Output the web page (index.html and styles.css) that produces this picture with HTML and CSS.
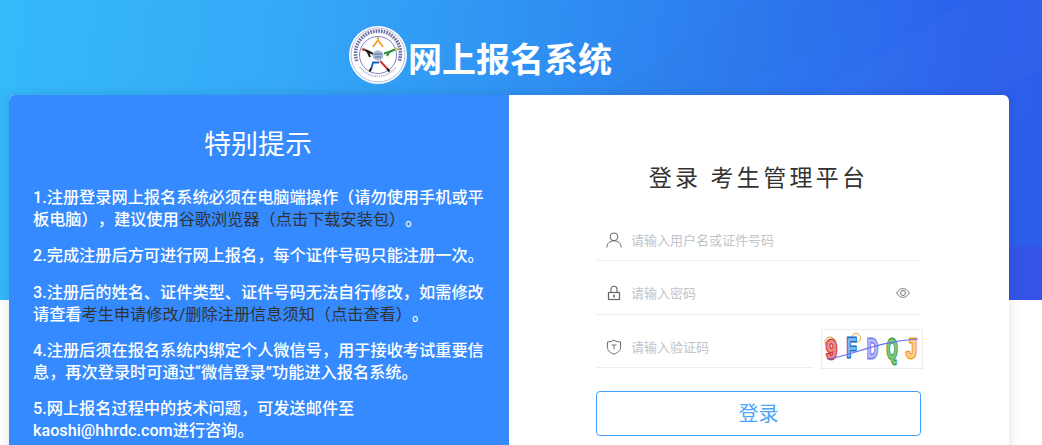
FILE: index.html
```html
<!DOCTYPE html>
<html lang="zh-CN">
<head>
<meta charset="utf-8">
<title>网上报名系统</title>
<link rel="stylesheet" href="styles.css">
</head>
<body>
<div class="page">
  <header class="brand">
    <svg class="logo" width="58" height="58" viewBox="0 0 58 58" aria-hidden="true">
      <circle cx="29" cy="29" r="29" fill="#fff"/>
      <circle cx="29" cy="29" r="27" fill="none" stroke="#a9acd0" stroke-width=".8"/>
      <circle cx="29" cy="29" r="18.5" fill="none" stroke="#6f76b5" stroke-width=".9"/>
      <path d="M7.8 35 A22.5 22.5 0 1 1 50.2 35" fill="none" stroke="#4a4f8f" stroke-width="3.6" stroke-dasharray="1.7 1" opacity=".8"/>
      <path d="M11 41 A22 22 0 0 0 47 41" fill="none" stroke="#a4a7bf" stroke-width="2" stroke-dasharray="1.2 1" opacity=".8"/>
      <path d="M29 14 L24 21 M29 14 L34 21" stroke="#f2a12e" stroke-width="1.8" fill="none"/>
      <circle cx="29" cy="12.5" r="1.3" fill="#f2a12e"/>
      <path d="M16 24 Q21 26 25 28.5 M18 25 Q20 28 21 31" stroke="#1c1a1a" stroke-width="2" fill="none"/>
      <circle cx="14.5" cy="23.5" r="1.6" fill="#b5432f"/>
      <path d="M46 23.5 Q41 26 35 27.5 M41 25 Q39 28 38 30" stroke="#2e8f35" stroke-width="2" fill="none"/>
      <circle cx="47.5" cy="23" r="1.6" fill="#e3c03a"/>
      <path d="M30 36.5 L24 36.5 L22.5 42" stroke="#1e63c4" stroke-width="1.9" fill="none"/>
      <path d="M22.5 42 L20.5 45.5" stroke="#1c1a1a" stroke-width="2" fill="none"/>
      <path d="M31 35 L33 37 L38 42.5" stroke="#d32f2f" stroke-width="1.9" fill="none"/>
      <path d="M38 42.5 L40.5 45.5" stroke="#1c1a1a" stroke-width="2" fill="none"/>
      <ellipse cx="29" cy="29.5" rx="5.5" ry="5" fill="#a9bcd6"/>
      <path d="M25 28 H33 M26 31 H32" stroke="#4f6a93" stroke-width=".9"/>
    </svg>
    <h1 class="brand-title">网上报名系统</h1>
  </header>
  <main class="card">
    <section class="notice">
      <h2 class="notice-title">特别提示</h2>
      <p class="notice-item">1.注册登录网上报名系统必须在电脑端操作（请勿使用手机或平板电脑），建议使用<a class="dark-link">谷歌浏览器（点击下载安装包）</a>。</p>
      <p class="notice-item">2.完成注册后方可进行网上报名，每个证件号码只能注册一次。</p>
      <p class="notice-item">3.注册后的姓名、证件类型、证件号码无法自行修改，如需修改请查看<a class="dark-link">考生申请修改/删除注册信息须知（点击查看）</a>。</p>
      <p class="notice-item">4.注册后须在报名系统内绑定个人微信号，用于接收考试重要信息，再次登录时可通过“微信登录”功能进入报名系统。</p>
      <p class="notice-item">5.网上报名过程中的技术问题，可发送邮件至<br>kaoshi@hhrdc.com进行咨询。</p>
    </section>
    <section class="login">
      <h2 class="login-title">登录 考生管理平台</h2>
      <div class="field field-user">
        <svg class="icon" width="16" height="16" viewBox="0 0 16 16" aria-hidden="true"><circle cx="8" cy="4.8" r="3.9" fill="none" stroke="#666" stroke-width="1"/><path d="M.8 15.6 C.8 11.4 4 8.8 8 8.8 S15.2 11.4 15.2 15.6" fill="none" stroke="#666" stroke-width="1"/></svg>
        <span class="placeholder">请输入用户名或证件号码</span>
      </div>
      <div class="field field-pass">
        <svg class="icon" width="16" height="16" viewBox="0 0 16 16" aria-hidden="true"><rect x="2.5" y="7.5" width="11" height="7" fill="none" stroke="#666" stroke-width="1.2"/><path d="M5 7.5 V4.2 a3 3 0 0 1 6 0 V7.5" fill="none" stroke="#666" stroke-width="1.1"/><rect x="7.2" y="9.6" width="1.6" height="2.8" fill="#666"/></svg>
        <span class="placeholder">请输入密码</span>
        <svg class="eye" width="14" height="10" viewBox="0 0 14 10" aria-hidden="true"><path d="M.6 5 C3 1.4 5 .6 7 .6 S11 1.4 13.4 5 C11 8.6 9 9.4 7 9.4 S3 8.6 .6 5 Z" fill="none" stroke="#666" stroke-width=".9"/><circle cx="7" cy="5" r="2.5" fill="none" stroke="#666" stroke-width=".9"/></svg>
      </div>
      <div class="captcha-row">
        <div class="field field-code">
          <svg class="icon" width="16" height="16" viewBox="0 0 16 16" aria-hidden="true"><path d="M8 1 C10 2.4 12 3 14.6 3 V8.4 C14.6 11.6 11.5 14 8 15.2 C4.5 14 1.4 11.6 1.4 8.4 V3 C4 3 6 2.4 8 1 Z" fill="none" stroke="#666" stroke-width="1"/><path d="M5.6 6 H10.4 M8 6 V10.4" fill="none" stroke="#666" stroke-width=".9"/></svg>
          <span class="placeholder">请输入验证码</span>
        </div>
        <svg class="captcha" width="102" height="40" viewBox="0 0 102 40" role="img" aria-label="9FDQJ">
          <rect x=".5" y=".5" width="101" height="39" fill="#fff" stroke="#ececec"/>
          <circle cx="9" cy="13" r="5" fill="none" stroke="#c9a24a"/>
          <circle cx="35" cy="9" r="4.5" fill="none" stroke="#eda83d"/>
          <text class="cap-char cap-red" x="5" y="30" textLength="11" lengthAdjust="spacingAndGlyphs">9</text>
          <text class="cap-char cap-blue" x="25.5" y="28" textLength="10" lengthAdjust="spacingAndGlyphs">F</text>
          <text class="cap-char cap-violet" x="46" y="29" textLength="11" lengthAdjust="spacingAndGlyphs">D</text>
          <text class="cap-char cap-green" x="65.5" y="29" textLength="11" lengthAdjust="spacingAndGlyphs">Q</text>
          <text class="cap-char cap-orange" x="85" y="29" textLength="11" lengthAdjust="spacingAndGlyphs">J</text>
          <path d="M6 30 C35 26 52 13 97 10" fill="none" stroke="#6a6cf5" stroke-width="1.2"/>
        </svg>
      </div>
      <button class="login-btn" type="button">登录</button>
    </section>
  </main>
</div>
</body>
</html>
```
FILE: styles.css
```css
html, body {
  margin: 0;
  height: 445px;
  overflow: hidden;
  background: #fff;
  font-family: "Noto Sans", "Noto Sans CJK SC", sans-serif;
}
.page {
  width: 1042px;
  height: 445px;
  overflow: hidden;
  background-color: #fff;
  background-image:
    linear-gradient(180deg, transparent 245px, #3354e6 248px),
    linear-gradient(148deg, transparent 514px, rgba(255,255,255,.014) 514px, rgba(255,255,255,.014) 610px, transparent 610px),
    linear-gradient(148deg, transparent 400px, rgba(0,0,0,.012) 400px, rgba(0,0,0,.012) 470px, transparent 470px),
    linear-gradient(97deg, #35bafb 0%, #35aaf7 25%, #2f93f3 48%, #2e7eef 66%, #2b62ec 90%, #2c5cea 100%);
  background-size: 33px 300px, 100% 300px, 100% 300px, 100% 300px;
  background-position: right top, left top, left top, left top;
  background-repeat: no-repeat;
}
.brand {
  height: 95px;
  display: flex;
  justify-content: flex-start;
  align-items: flex-start;
  padding: 26px 0 0 349px;
  box-sizing: border-box;
}
.logo { flex: none; }
.brand-title {
  margin: 9px 0 0 1px;
  font-family: "Noto Sans CJK SC", sans-serif;
  font-size: 34px;
  line-height: 46px;
  font-weight: 700;
  color: #fff;
}
.card {
  width: 1000px;
  margin-left: 9px;
  display: flex;
  height: 400px;
  border-radius: 6px 6px 0 0;
  background: #fff;
  box-shadow: 0 0 12px rgba(0, 0, 0, .12);
}
.notice {
  width: 500px;
  box-sizing: border-box;
  padding: 31px 16px 0 24px;
  background: #348afe;
  color: #fff;
  border-radius: 6px 0 0 0;
}
.notice-title {
  margin: 0 10px 25px 0;
  text-align: center;
  font-size: 27px;
  line-height: 36px;
  font-weight: 400;
}
.notice-item {
  margin: 0 0 14.3px;
  font-family: Roboto, "Noto Sans CJK SC", sans-serif;
  font-size: 16.2px;
  line-height: 22px;
  font-weight: 500;
  text-spacing-trim: space-all;
}
.dark-link { color: #333; font-weight: 400; }
.login {
  width: 500px;
  box-sizing: border-box;
  padding: 66px 88px 0 87px;
}
.login-title {
  margin: 0 0 24px;
  text-align: center;
  font-size: 23px;
  line-height: 32px;
  font-weight: 400;
  letter-spacing: 3.3px;
  color: #333;
}
.field {
  display: flex;
  align-items: center;
  box-sizing: border-box;
  height: 44px;
  padding: 1px 10px 0;
  border-bottom: 1px solid #ebeef5;
  margin-bottom: 10px;
}
.field-user { padding-top: 2px; }
.icon { flex: none; margin-right: 9px; }
.placeholder {
  font-size: 13px;
  color: #c0c4cc;
  line-height: 20px;
}
.eye { margin-left: auto; margin-right: 1px; }
.captcha-row {
  display: flex;
  align-items: flex-start;
  justify-content: space-between;
  margin-right: -2px;
}
.field-code {
  width: 217px;
  height: 43px;
  margin: 0;
}
.captcha { flex: none; margin-top: 4px; }
.cap-char {
  font-family: "Liberation Sans", sans-serif;
  font-size: 27px;
  font-weight: 700;
  stroke-width: 2.8px;
  paint-order: stroke;
}
.cap-red { fill: #e88a85; stroke: #cf3a36; }
.cap-blue { fill: #7fb4ee; stroke: #1669c9; }
.cap-violet { fill: #b4b7f8; stroke: #7478ee; }
.cap-green { fill: #7cc880; stroke: #3a9a3e; }
.cap-orange { fill: #fbd08a; stroke: #f59a0c; }
.login-btn {
  display: block;
  width: 100%;
  height: 45px;
  margin-top: 22px;
  padding: 0 0 2px;
  background: #fff;
  border: 1px solid #409eff;
  border-radius: 4px;
  color: #4ea5fb;
  font: inherit;
  font-size: 20px;
}
```
